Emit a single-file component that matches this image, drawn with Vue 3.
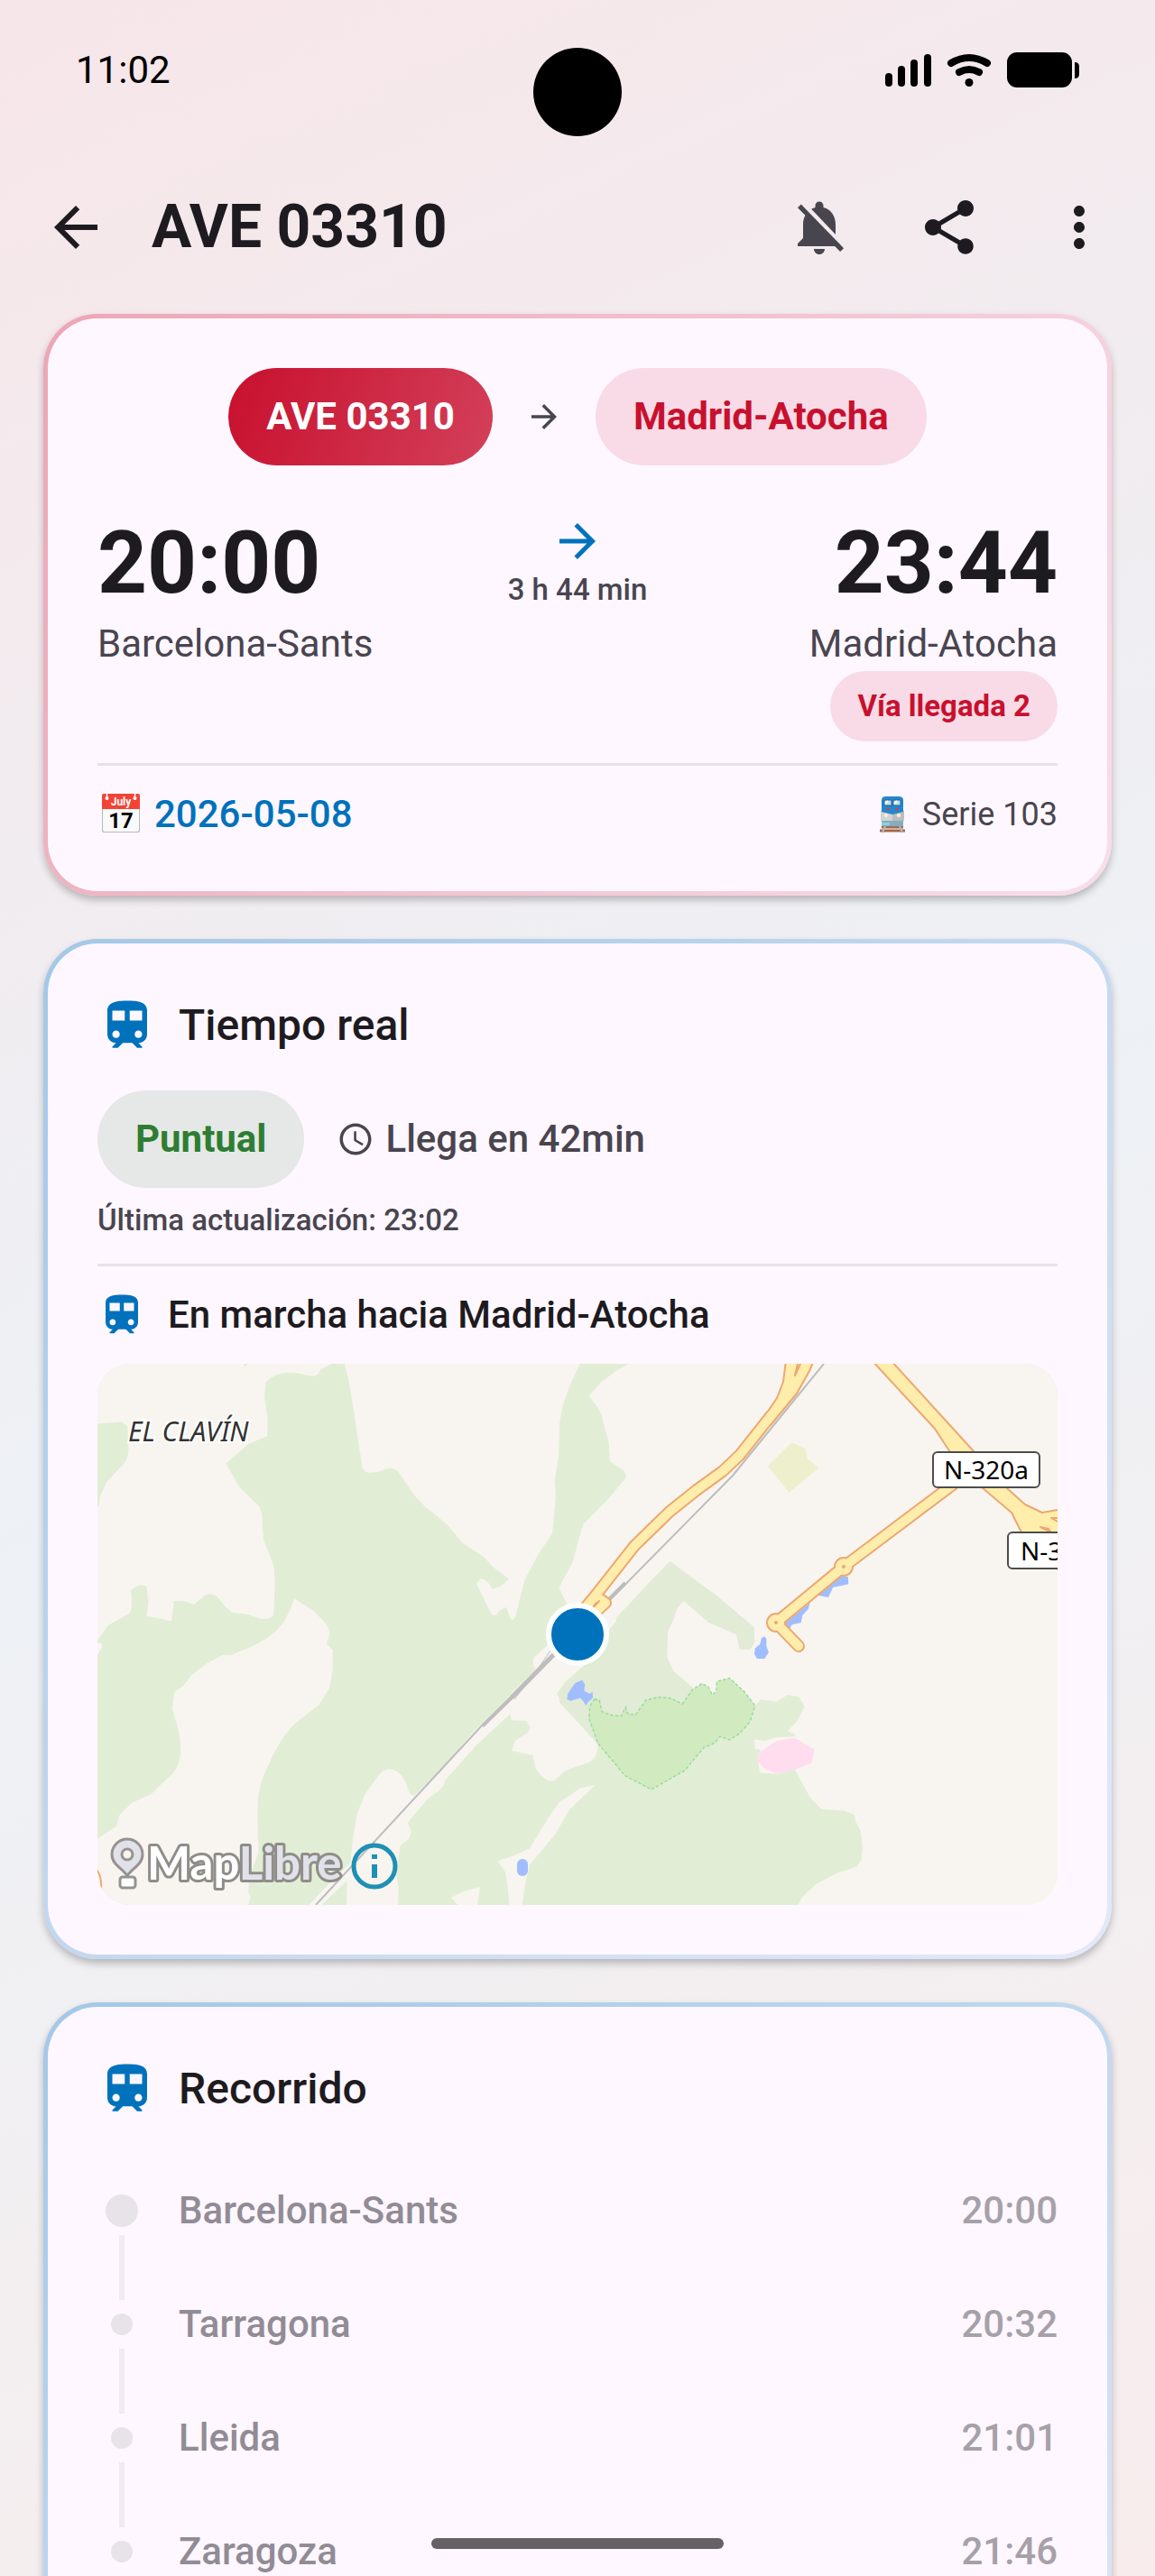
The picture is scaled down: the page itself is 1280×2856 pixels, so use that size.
<script setup>
import { ref } from 'vue';

const trainPath =
  'M12 2c-4 0-8 .5-8 4v9.5C4 17.43 5.57 19 7.5 19L6 20.5v.5h2.23l2-2H14l2 2h2v-.5L16.5 19c1.93 0 3.5-1.57 3.5-3.5V6c0-3.5-3.58-4-8-4zM7.5 17c-.83 0-1.5-.67-1.5-1.5S6.67 14 7.5 14s1.5.67 1.5 1.5S8.33 17 7.5 17zm3.5-7H6V6h5v4zm2 0V6h5v4h-5zm3.5 7c-.83 0-1.5-.67-1.5-1.5s.67-1.5 1.5-1.5 1.5.67 1.5 1.5-.67 1.5-1.5 1.5z';
const arrowPath = 'M12 4l-1.41 1.41L16.17 11H4v2h12.17l-5.58 5.59L12 20l8-8z';

const train = ref({
  name: 'AVE 03310',
  origin: 'Barcelona-Sants',
  destination: 'Madrid-Atocha',
  departure: '20:00',
  arrival: '23:44',
  duration: '3 h 44 min',
  platform: 'Vía llegada 2',
  date: '2026-05-08',
  model: 'Serie 103'
});

const stops = ref([
  { name: 'Barcelona-Sants', time: '20:00', main: true },
  { name: 'Tarragona', time: '20:32' },
  { name: 'Lleida', time: '21:01' },
  { name: 'Zaragoza', time: '21:46' }
]);
</script>

<template>
  <div class="screen">
    <div class="status-bar">
      <span class="clock">11:02</span>
      <div class="camera"></div>
      <svg class="status-icons" viewBox="0 0 216 40" aria-hidden="true">
        <rect x="1" y="23" width="8" height="15" rx="4" />
        <rect x="15" y="15" width="8" height="23" rx="4" />
        <rect x="29" y="8" width="8" height="30" rx="4" />
        <rect x="44" y="2" width="8" height="36" rx="4" />
        <path d="M74 12q20-12 40 0" class="wave" />
        <path d="M83 22q11-6 22 0" class="wave" />
        <circle cx="94" cy="33.500" r="4.500" />
        <rect x="136" y="0" width="72" height="39" rx="11" />
        <path d="M211 11q5 0 5 5v8q0 5-5 5z" />
      </svg>
    </div>

    <header class="app-bar">
      <button class="icon-button" aria-label="Volver">
        <svg viewBox="0 0 24 24"><path d="M20 11H7.83l5.59-5.59L12 4l-8 8 8 8 1.41-1.41L7.83 13H20v-2z" /></svg>
      </button>
      <h1>{{ train.name }}</h1>
      <button class="icon-button muted" aria-label="Notificaciones">
        <svg viewBox="0 0 24 24">
          <path d="M20 18.69L7.84 6.14 5.27 3.49 4 4.76l2.8 2.8v.01c-.52.99-.8 2.16-.8 3.42v5l-2 2v1h13.73l2 2L21 19.72l-1-1.03zM12 22c1.11 0 2-.89 2-2h-4c0 1.11.89 2 2 2zm6-7.32V11c0-3.08-1.64-5.64-4.5-6.32V4c0-.83-.67-1.5-1.5-1.5s-1.5.67-1.5 1.5v.68c-.15.03-.29.08-.42.12-.1.03-.2.07-.3.11h-.01c-.01 0-.01 0-.02.01-.23.09-.46.2-.68.31 0 0-.01 0-.01.01L18 14.68z" />
        </svg>
      </button>
      <button class="icon-button" aria-label="Compartir">
        <svg viewBox="0 0 24 24">
          <path d="M18 16.08c-.76 0-1.44.3-1.96.77L8.91 12.7c.05-.23.09-.46.09-.7s-.04-.47-.09-.7l7.05-4.11c.54.5 1.25.81 2.04.81 1.66 0 3-1.34 3-3s-1.34-3-3-3-3 1.34-3 3c0 .24.04.47.09.7L8.04 9.81C7.5 9.31 6.79 9 6 9c-1.66 0-3 1.34-3 3s1.34 3 3 3c.79 0 1.5-.31 2.04-.81l7.12 4.16c-.05.21-.08.43-.08.65 0 1.61 1.31 2.92 2.92 2.92s2.92-1.31 2.92-2.92-1.31-2.92-2.92-2.92z" />
        </svg>
      </button>
      <button class="icon-button" aria-label="Más opciones">
        <svg viewBox="0 0 24 24">
          <path d="M12 8c1.1 0 2-.9 2-2s-.9-2-2-2-2 .9-2 2 .9 2 2 2zm0 2c-1.1 0-2 .9-2 2s.9 2 2 2 2-.9 2-2-.9-2-2-2zm0 6c-1.1 0-2 .9-2 2s.9 2 2 2 2-.9 2-2-.9-2-2-2z" />
        </svg>
      </button>
    </header>

    <main class="content">
      <section class="card summary">
        <div class="route">
          <span class="chip train-chip">{{ train.name }}</span>
          <svg class="route-arrow" viewBox="0 0 24 24"><path :d="arrowPath" /></svg>
          <span class="chip destination-chip">{{ train.destination }}</span>
        </div>

        <div class="times">
          <div class="endpoint">
            <span class="hour">{{ train.departure }}</span>
            <span class="station">{{ train.origin }}</span>
          </div>
          <div class="duration">
            <svg viewBox="0 0 24 24"><path :d="arrowPath" /></svg>
            <span>{{ train.duration }}</span>
          </div>
          <div class="endpoint arrival">
            <span class="hour">{{ train.arrival }}</span>
            <span class="station">{{ train.destination }}</span>
            <span class="platform">{{ train.platform }}</span>
          </div>
        </div>

        <hr />

        <div class="meta">
          <div class="date">
            <svg class="calendar" viewBox="0 0 48 48" aria-hidden="true">
              <rect x="5" y="2" width="42" height="42" rx="2" fill="#b9b9b9" />
              <path d="M6 17h40v24a2 2 0 0 1-2 2H8a2 2 0 0 1-2-2z" fill="#fafafa" />
              <path d="M5 18V3a2 2 0 0 1 2-2h38a2 2 0 0 1 2 2v15z" fill="#f44336" />
              <path d="M10.500 0v6M41.500 0v6" stroke="#fff" stroke-width="1.500" />
              <circle cx="10.500" cy="6" r="2" fill="#fff" />
              <circle cx="41.500" cy="6" r="2" fill="#fff" />
              <text x="26" y="14" class="cal-month">July</text>
              <text x="26" y="39" class="cal-day">17</text>
            </svg>
            <span>{{ train.date }}</span>
          </div>
          <div class="model">
            <svg class="engine" viewBox="0 0 42 42" aria-hidden="true">
              <path d="M7 39h28M9 35h24" stroke="#a5694a" stroke-width="3" />
              <path d="M13 34l-3 7M29 34l3 7" stroke="#b0b7bb" stroke-width="2" />
              <path d="M9 27h24v6q0 1-1 1H10q-1 0-1-1z" fill="#82aec0" />
              <path d="M9 30h9v3H9z" fill="#86d3e4" />
              <path d="M8 17h13v11H8z" fill="#d3d3d3" />
              <path d="M21 17h13v11H21z" fill="#bdbdbd" />
              <path d="M9 5q0-4 5-4h14q5 0 5 4v13l-12 3-12-3z" fill="#2387cf" />
              <path d="M12 5h8v6h-8zM22 5h8v6h-8z" fill="#b9e4ee" stroke="#2f5f86" stroke-width="1" />
              <path d="M13 9l3-3M23 9l3-3" stroke="#fff" stroke-width="2" />
              <circle cx="16" cy="15" r="1.500" fill="#e53935" />
              <circle cx="26" cy="15" r="1.500" fill="#e53935" />
              <circle cx="14" cy="22" r="2" fill="#fff6d8" />
              <circle cx="28" cy="22" r="2" fill="#fff6d8" />
            </svg>
            <span>{{ train.model }}</span>
          </div>
        </div>
      </section>

      <section class="card live">
        <div class="card-title">
          <svg viewBox="0 0 24 24"><path :d="trainPath" /></svg>
          <h2>Tiempo real</h2>
        </div>

        <div class="state">
          <span class="chip state-chip">Puntual</span>
          <div class="eta">
            <svg viewBox="0 0 24 24">
              <path d="M11.990 2C6.470 2 2 6.480 2 12s4.470 10 9.990 10C17.520 22 22 17.520 22 12S17.520 2 11.990 2zM12 20c-4.420 0-8-3.580-8-8s3.580-8 8-8 8 3.580 8 8-3.580 8-8 8zm.5-13H11v6l5.250 3.150.75-1.230-4.500-2.670z" />
            </svg>
            <span>Llega en 42min</span>
          </div>
        </div>
        <p class="updated">Última actualización: 23:02</p>

        <hr />

        <div class="heading-to">
          <svg viewBox="0 0 24 24"><path :d="trainPath" /></svg>
          <h3>En marcha hacia Madrid-Atocha</h3>
        </div>

        <div class="map">
          <svg class="map-canvas" viewBox="0 0 1064 600" preserveAspectRatio="xMidYMid slice" aria-label="Mapa">
            <rect width="1064" height="600" fill="#e1eed5" />

            <!-- open land, western half -->
            <g transform="translate(-28 -22) scale(.3827 .4082)" fill="#f8f5f0">
              <path d="M788 54L800 95L815 180L840 335Q846 350 862 350Q885 350 905 340Q930 332 945 348L990 410L1020 440L1085 490L1130 540L1195 580L1215 603L1265 638Q1240 665 1215 665Q1208 650 1200 645Q1182 628 1171 652L1215 735Q1230 740 1235 726L1257 715L1270 748Q1278 755 1284 738L1310 642L1350 570L1390 515L1400 420L1397 370L1408 310L1412 210L1420 170L1440 115L1470 54z" />
              <path d="M60 50H498V64L510 54H752L720 68Q714 86 700 87L680 85Q600 64 560 105L557 145L565 200V250L510 272L445 325L485 390L540 440Q552 460 550 480Q552 520 555 535L583 600Q590 640 583 735Q575 750 545 746L510 735L465 730L445 715L418 685Q400 675 385 682L352 708L325 698H295L287 753L215 738L221 705L216 660Q198 646 170 670Q176 725 165 732L103 765L73 805L60 820V442L78 440L80 415L100 375L140 335Q165 315 163 280L160 225L145 211L60 218z" />
              <path d="M60 812H84L87 822L73 845H60z" />
              <path d="M643 692L700 725L735 760Q747 780 745 790L737 815L755 832L753 890L745 935L715 980L640 1035L610 1070L585 1110L555 1170Q540 1210 538 1240L536 1290L540 1380L512 1450L510 1490L517 1500L508 1530H60V1352L128 1310L137 1280L172 1247L230 1222L270 1185Q312 1155 314 1110Q315 1075 308 1050L290 990L296 945L320 930L345 900L390 868L435 845H460L520 822Q590 790 612 755Q630 730 643 692z" />
              <path d="M1380 815L1340 850Q1328 862 1342 885L1270 950L1265 965L1200 1020L1165 1050L1120 1100L1065 1165L1030 1190L990 1228Q975 1228 970 1200Q950 1155 920 1155Q900 1155 885 1175L850 1220L825 1275L812 1350L806 1410L745 1465L680 1530H715L797 1457L794 1530H943L945 1475L938 1440L950 1362L975 1345L982 1322L971 1300L1030 1235L1060 1215L1075 1200L1080 1185L1170 1090L1268 1005L1272 1022L1315 1024L1327 1042L1320 1055L1283 1078L1273 1105L1333 1117L1342 1150Q1365 1190 1395 1187Q1415 1170 1430 1158L1500 1135Q1522 1120 1522 1090L1480 1035L1415 975L1403 950L1430 915L1480 875L1575 762V660L1432 705z" />
              <path d="M1516 1197L1470 1208L1410 1245L1370 1300L1325 1370L1285 1388L1232 1405L1255 1435L1262 1480L1267 1530H1302L1312 1465L1325 1415L1400 1330L1440 1265z" />
              <path d="M1097 1503L1140 1485L1181 1475L1173 1530H1122z" />
            </g>

            <!-- open land, parks and water, eastern half -->
            <g transform="translate(512 -22) scale(.4209 .4592)">
              <path fill="#f8f5f0" d="M188 46L150 65L110 92L78 126L100 152L110 170L130 238L133 283L172 308L176 322L130 373L63 435L50 475L36 525L-1 588L20 630L60 700L135 675L240 572L292 525L410 605L512 684L514 718L503 737H475L466 702L392 672L327 620L310 638L300 665L285 695L283 755L300 790L352 831L415 880L515 873L530 858L572 864L600 847L630 852L646 875L625 912L600 935L620 942V948L570 950L540 958L513 955L515 978L530 980L522 1000L528 1035L570 1038L620 1028L660 1095L690 1123L750 1127L777 1137L780 1153L793 1175L798 1218L795 1245L783 1262L730 1278L675 1305L640 1335L625 1360H1320V40z" />
              <path fill="#e1ebd6" d="M135 685L180 640L240 572L292 525L320 550L410 605L512 684L514 718L503 737H475L466 702L392 672L327 620L310 638L300 665L285 695L283 755L300 790L352 831L300 900L100 965L0 865V835L65 780z" />
              <path fill="#d1eac0" stroke="#8fdd92" stroke-width="3" stroke-dasharray="8 5" d="M92 858L105 860L112 888L140 897L163 898L174 877L180 893L200 896L228 860L260 853L290 855L324 869L350 835L375 820L392 828L403 848L413 838L414 815L448 807L485 838L515 873L502 912L475 940L448 956L422 948L410 963L380 975L330 1030L242 1076L172 1042L102 965L78 905L80 875z" />
              <path fill="#ffdcee" d="M572 958L620 951L672 980L664 1012L620 1028L570 1037L540 1025L520 1005L530 985z" />
              <path fill="#eeefcc" d="M612 238L648 253L652 277L683 299L605 359L548 295z" />
              <g fill="#a0bdff">
                <path d="M60 812L67 822L65 838L80 845L87 840L88 855L75 865L70 873L62 862L55 855L30 862L20 858L22 845L32 830L42 818z" />
                <path d="M540 706L545 712V730L551 745L540 760H520L513 748L515 735L528 725L532 710z" />
                <path d="M760 562L761 580L720 588L708 612L680 607L735 562z" />
                <path d="M660 625L655 640L640 655L636 673L612 678L605 690L588 678z" />
              </g>
            </g>
            <rect x="465" y="549" width="12" height="19" rx="6" fill="#a0bdff" />

            <!-- railway -->
            <g fill="none" stroke="#bdbdbd">
              <path d="M805 0L765 49L704 124L558 272L427 400L242 600" stroke-width="2" />
              <path d="M585 243L532 296" stroke-width="4" />
              <path d="M502 318L487 340L462 372" stroke-width="1" />
              <path d="M508 320L459 370" stroke-width="5" />
              <path d="M461 369L427 402" stroke-width="3" />
            </g>

            <!-- main roads -->
            <g stroke-linejoin="round" stroke-linecap="round">
              <path class="road-case" d="M746 58L712 101L693 119L664 140L634 164L595 202L551 258L536 276" />
              <path class="road-case" d="M948 134L827 225L752 287L777 313" />
              <circle class="road-node" cx="827" cy="225" r="10" />
              <circle class="road-node" cx="752" cy="287" r="10" />
              <path class="road-shape" d="M763 -4L760 20L753 38L738 60L746 68L775 33L789 8L794 -4zM858 -4L928 72L945 98L980 137L1013 165L1024 187L1070 234V161L1047 165L1028 156L1009 139L971 97L879 -4z" />
              <path class="road-case" d="M553 258L563 265L548 279" />
              <path class="road-fill" d="M746 58L712 101L693 119L664 140L634 164L595 202L551 258L536 276" />
              <path class="road-fill" d="M948 134L827 225L752 287L777 313M553 258L563 265L548 279" />
              <path class="road-line" d="M776 0L773 13L779 0M1070 171H1057L1064 175M1045 181L1057 187L1054 183zM556 263L549 271" />
              <circle cx="827" cy="225" r="2" fill="#eda772" />
              <circle cx="752" cy="287" r="2" fill="#eda772" />
              <path class="road-line" d="M0 562Q5 570 4 582" />
            </g>

            <text x="34" y="86" class="place">EL CLAVÍN</text>
            <rect x="926" y="98" width="118" height="39" rx="5" class="shield" />
            <text x="985" y="128" class="shield-text">N-320a</text>
            <rect x="1009" y="187" width="118" height="40" rx="5" class="shield" />
            <text x="1023" y="218" class="shield-text start">N-3</text>

            <circle cx="532" cy="300" r="32" fill="#0072bc" stroke="#fff" stroke-width="6" />
          </svg>

          <div class="attribution">
            <a href="#" aria-label="MapLibre">
              <svg class="maplibre" viewBox="0 0 266 62">
                <path d="M20 42C16 34 3 30 3 18a17 17 0 0 1 34 0c0 12-13 16-17 24z" class="pin" />
                <circle cx="20" cy="18" r="6" class="pin-hole" />
                <rect x="12" y="43" width="17" height="12" rx="3" class="basket" />
                <text x="42" y="46" class="brand">Map<tspan class="brand-end">Libre</tspan></text>
              </svg>
            </a>
            <button class="info" aria-label="Información">
              <svg viewBox="0 0 52 52">
                <circle cx="26" cy="26" r="23" fill="none" stroke="#1e90b4" stroke-width="5" />
                <path d="M23 13h6v5h-6zM23 24h6v15h-6z" fill="#1e90b4" />
              </svg>
            </button>
          </div>
        </div>
      </section>

      <section class="card stops">
        <div class="card-title">
          <svg viewBox="0 0 24 24"><path :d="trainPath" /></svg>
          <h2>Recorrido</h2>
        </div>
        <ol>
          <li v-for="stop in stops" :key="stop.name">
            <div class="track">
              <div class="dot-box">
                <div class="dot" :class="{ main: stop.main }"></div>
              </div>
              <div class="line"></div>
            </div>
            <span class="stop-name">{{ stop.name }}</span>
            <span class="stop-time">{{ stop.time }}</span>
          </li>
        </ol>
      </section>
    </main>

    <div class="home-indicator"></div>
  </div>
</template>

<style>
body {
  margin: 0;
}
</style>

<style scoped>
.screen {
  position: relative;
  display: flex;
  flex-direction: column;
  height: 100vh;
  overflow: hidden;
  background: linear-gradient(156deg, #f7e6e9 0%, #edf1f5 50%, #f8ecec 100%);
  color: #1d1b20;
  font-family: Roboto, 'Liberation Sans', sans-serif;
  font-size: 42px;
  line-height: 60px;
}

h1,
h2,
h3,
p,
ol {
  margin: 0;
  padding: 0;
}

button {
  padding: 0;
  border: none;
  background: none;
  color: inherit;
  cursor: pointer;
}

svg {
  display: block;
  flex: none;
  fill: currentColor;
}

hr {
  width: 100%;
  height: 3px;
  margin: 24px 0;
  border: none;
  background: #e8e1e9;
}

.status-bar {
  position: relative;
  display: flex;
  flex: none;
  justify-content: space-between;
  align-items: flex-start;
  box-sizing: border-box;
  height: 156px;
  padding: 0 84px;
  color: #000;
}

.clock {
  margin-top: 48px;
}

.status-icons {
  width: 216px;
  height: 40px;
  margin-top: 58px;
}

.wave {
  fill: none;
  stroke: #000;
  stroke-width: 8;
  stroke-linecap: round;
}

.camera {
  position: absolute;
  top: 53px;
  left: 50%;
  width: 98px;
  height: 98px;
  border-radius: 50%;
  background: #000;
  transform: translateX(-50%);
}

.app-bar {
  display: flex;
  flex: none;
  align-items: center;
  height: 192px;
  padding: 0 12px;
}

.app-bar h1 {
  flex: 1;
  padding-left: 12px;
  font-size: 66px;
  font-weight: 700;
  line-height: 84px;
}

.icon-button {
  display: flex;
  justify-content: center;
  align-items: center;
  width: 144px;
  height: 144px;
}

.icon-button svg {
  width: 72px;
  height: 72px;
}

.icon-button.muted {
  color: #49454f;
}

.content {
  display: flex;
  flex: 1;
  flex-direction: column;
  gap: 48px;
  min-height: 0;
  padding: 0 48px;
}

.card {
  flex: none;
  padding: 55px;
  border: 5px solid transparent;
  border-radius: 60px;
  box-shadow: 0 5px 9px rgba(0, 0, 0, 0.24);
}

.summary {
  background:
    linear-gradient(#fef7ff, #fef7ff) padding-box,
    linear-gradient(119deg, #eca6b6, #f9deea) border-box;
}

.live {
  background:
    linear-gradient(#fef7ff, #fef7ff) padding-box,
    linear-gradient(134deg, #a3c8e7, #e3e9f9) border-box;
}

.stops {
  background:
    linear-gradient(#fef7ff, #fef7ff) padding-box,
    linear-gradient(145deg, #a3c8e7, #dce7f7) border-box;
}

.chip {
  padding: 24px 42px;
  border-radius: 54px;
  font-weight: 700;
}

.route {
  display: flex;
  justify-content: center;
  align-items: center;
  gap: 36px;
  margin-bottom: 48px;
}

.route-arrow {
  width: 42px;
  height: 42px;
  color: #49454f;
}

.train-chip {
  background: linear-gradient(110deg, #c8102e, #d3405a);
  color: #fff;
}

.destination-chip,
.platform {
  background: #f8dbe6;
  color: #c8102e;
}

.times {
  display: grid;
  grid-template-columns: 1fr auto 1fr;
}

.endpoint {
  display: flex;
  flex-direction: column;
  align-items: flex-start;
}

.arrival {
  align-items: flex-end;
}

.hour {
  font-size: 96px;
  font-weight: 700;
  line-height: 120px;
}

.station {
  color: #49454f;
}

.platform {
  padding: 15px 30px;
  border-radius: 39px;
  font-size: 33px;
  font-weight: 700;
  line-height: 48px;
}

.duration {
  display: flex;
  flex-direction: column;
  align-items: center;
  padding-top: 6px;
  color: #49454f;
  font-size: 33px;
  font-weight: 500;
  line-height: 48px;
}

.duration svg {
  width: 60px;
  height: 60px;
  color: #0072bc;
}

.meta {
  display: flex;
  justify-content: space-between;
  align-items: center;
}

.date,
.model {
  display: flex;
  align-items: center;
  gap: 12px;
}

.date {
  gap: 15px;
  color: #0072bc;
  font-weight: 500;
}

.model {
  color: #49454f;
  font-size: 36px;
}

.calendar {
  width: 48px;
  height: 48px;
}

.engine {
  width: 42px;
  height: 42px;
}

.cal-month,
.cal-day {
  font-weight: 700;
  text-anchor: middle;
}

.cal-month {
  fill: #fff;
  font-size: 12px;
}

.cal-day {
  fill: #000;
  font-size: 24px;
}

.card-title {
  display: flex;
  align-items: center;
  gap: 24px;
  margin-bottom: 36px;
}

.card-title svg {
  width: 66px;
  height: 66px;
  color: #0072bc;
}

.card-title h2 {
  font-size: 48px;
  font-weight: 500;
  line-height: 72px;
}

.state {
  display: flex;
  align-items: center;
  gap: 36px;
}

.state-chip {
  background: #e5e8e6;
  color: #2e7d32;
}

.eta {
  display: flex;
  align-items: center;
  gap: 12px;
  color: #49454f;
  font-weight: 500;
}

.eta svg {
  width: 42px;
  height: 42px;
}

.updated {
  margin-top: 12px;
  color: #49454f;
  font-size: 33px;
  font-weight: 500;
  line-height: 48px;
}

.heading-to {
  display: flex;
  align-items: center;
  gap: 24px;
  margin-bottom: 24px;
}

.heading-to svg {
  width: 54px;
  height: 54px;
  color: #0072bc;
}

.heading-to h3 {
  font-size: 42px;
  font-weight: 500;
}

.map {
  position: relative;
  overflow: hidden;
  border-radius: 36px;
}

.map-canvas {
  width: 100%;
  height: 600px;
}

.road-case {
  fill: none;
  stroke: #eda772;
  stroke-width: 14;
}

.road-fill {
  fill: none;
  stroke: #ffeeab;
  stroke-width: 10;
}

.road-shape,
.road-node {
  fill: #ffeeab;
  stroke: #eda772;
  stroke-width: 2;
}

.road-line {
  fill: none;
  stroke: #eda772;
  stroke-width: 2;
}

.place {
  fill: #333;
  stroke: #fff;
  stroke-width: 4;
  paint-order: stroke;
  font-family: 'Noto Sans', sans-serif;
  font-size: 30px;
  font-style: italic;
}

.shield {
  fill: #fff;
  stroke: #4d4d4d;
  stroke-width: 2;
}

.shield-text {
  fill: #000;
  font-family: 'Noto Sans', sans-serif;
  font-size: 28px;
  text-anchor: middle;
}

.shield-text.start {
  text-anchor: start;
}

.attribution {
  position: absolute;
  bottom: 12px;
  left: 13px;
  display: flex;
  align-items: center;
  gap: 2px;
}

.maplibre {
  width: 266px;
  height: 62px;
  overflow: visible;
}

.pin,
.basket {
  stroke: #96928f;
  stroke-width: 3;
}

.pin {
  fill: #e1e2e9;
}

.pin-hole {
  fill: #f8f5f0;
  stroke: #96928f;
  stroke-width: 3;
}

.basket {
  fill: #fff;
}

.brand {
  fill: #fff;
  stroke: #8f8d89;
  stroke-width: 6;
  stroke-linejoin: round;
  paint-order: stroke;
  font-family: Lato, sans-serif;
  font-size: 51px;
  font-weight: 700;
}

.brand-end {
  fill: #e1e2e9;
}

.info,
.info svg {
  width: 52px;
  height: 52px;
}

.stops ol {
  padding-top: 36px;
  list-style: none;
}

.stops li {
  display: flex;
  gap: 36px;
  font-weight: 500;
  line-height: 54px;
}

.track {
  display: flex;
  flex-direction: column;
  align-items: center;
}

.dot-box {
  display: flex;
  justify-content: center;
  align-items: center;
  width: 54px;
  height: 54px;
}

.dot {
  width: 24px;
  height: 24px;
  border-radius: 50%;
  background: #e8e3e9;
}

.dot.main {
  width: 36px;
  height: 36px;
}

.line {
  width: 6px;
  height: 72px;
  background: #f0eaf2;
}

.stop-name {
  flex: 1;
  color: #918c95;
}

.stop-time {
  color: #a6a1a8;
}

.home-indicator {
  position: absolute;
  bottom: 30px;
  left: 50%;
  width: 324px;
  height: 12px;
  border-radius: 6px;
  background: #656166;
  transform: translateX(-50%);
}
</style>
